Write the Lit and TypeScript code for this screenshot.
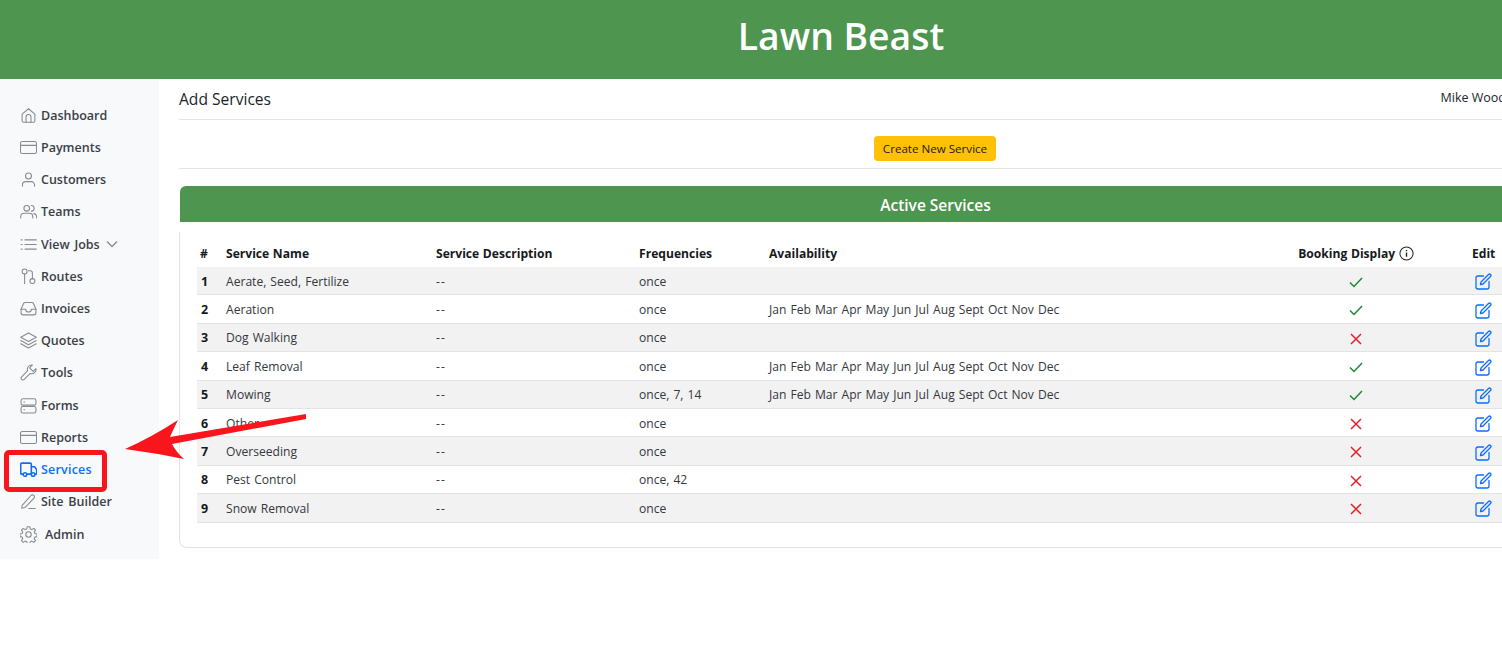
import { LitElement, css, html, svg } from 'lit';
import { customElement } from 'lit/decorators.js';

const icons: Record<string, unknown> = {
	home: svg`<path d="M3 10 12 2.500 21 10v9.500a2 2 0 0 1-2 2H5a2 2 0 0 1-2-2z"/><path d="M8.500 21.500V14a3.500 3.500 0 0 1 7 0v7.500"/>`,
	card: svg`<rect x="0.700" y="3.500" width="22.600" height="17" rx="2.500"/><path d="M0.700 9h22.600"/>`,
	user: svg`<circle cx="12" cy="7" r="4.200"/><path d="M3.500 21.500v-2a4.500 4.500 0 0 1 4.500-4.500h8a4.500 4.500 0 0 1 4.500 4.500v2"/>`,
	users: svg`<circle cx="9.500" cy="7.500" r="4"/><path d="M1 21v-2a4.500 4.500 0 0 1 4.500-4.500h8a4.500 4.500 0 0 1 4.500 4.500v2"/><path d="M16 3.500a4 4 0 0 1 0 8M19.500 15a4.500 4.500 0 0 1 4 4.500V21"/>`,
	list: svg`<path d="M7 5.500h16M7 12h16M7 18.500h16M1.500 5.500h1.500M1.500 12h1.500M1.500 18.500h1.500"/>`,
	route: svg`<circle cx="6.500" cy="5" r="3.500"/><path d="M6.500 8.500V22"/><circle cx="17.500" cy="18.500" r="3.500"/><path d="M17.500 15V7a3 3 0 0 0-3-3H12"/>`,
	inbox: svg`<path d="M1.500 13v5a3 3 0 0 0 3 3h15a3 3 0 0 0 3-3v-5"/><path d="M1.500 13 5 5a2.500 2.500 0 0 1 2.300-1.500h9.400A2.500 2.500 0 0 1 19 5l3.500 8H16a4 4 0 0 1-8 0z"/>`,
	layers: svg`<path d="M12 1.500 23 7.500l-11 6-11-6z"/><path d="M1 12l11 6 11-6"/><path d="M1 16.500l11 6 11-6"/>`,
	wrench: svg`<path d="M22.500 6.500a6 6 0 0 1-8 6.800L5.500 22a2.500 2.500 0 0 1-3.500-3.500l8.800-9a6 6 0 0 1 6.700-8L13.500 5.500l5 5z"/>`,
	forms: svg`<rect x="1.500" y="2.500" width="21" height="9" rx="2.500"/><rect x="1.500" y="13.500" width="21" height="9" rx="2.500"/><path d="M5.500 7h1M5.500 18h1"/>`,
	truck: svg`<path d="M4 18.500H2.500A1.500 1.500 0 0 1 1 17V5a2 2 0 0 1 2-2h11.500a1.500 1.500 0 0 1 1.500 1.500v14H9.500"/><path d="M16 8h4.500l3 4v5a1.500 1.500 0 0 1-1.500 1.500h-.5"/><circle cx="7" cy="19" r="2.500"/><circle cx="18.500" cy="19" r="2.500"/>`,
	pen: svg`<path d="M3 17.500 15.500 3.500a2.800 2.800 0 0 1 4 4L7 20.500 2.500 21.500z"/><path d="M12.500 22h9"/>`,
	gear: svg`<circle cx="12" cy="12" r="3.800"/><path d="M10.200 1h3.600l.700 3.200 2.200.900 2.700-1.800 2.500 2.500-1.800 2.700.900 2.200 3 .700v3.600l-3 .700-.900 2.200 1.800 2.700-2.500 2.500-2.700-1.800-2.200.900-.700 3.200h-3.600l-.700-3.200-2.200-.900-2.700 1.800-2.500-2.500 1.800-2.700-.900-2.200-3-.700v-3.600l3-.700.900-2.200-1.800-2.700 2.500-2.500 2.700 1.800 2.200-.900z"/>`,
};

const nav = [
	{ label: 'Dashboard', icon: 'home' },
	{ label: 'Payments', icon: 'card' },
	{ label: 'Customers', icon: 'user' },
	{ label: 'Teams', icon: 'users' },
	{ label: 'View Jobs', icon: 'list', caret: true },
	{ label: 'Routes', icon: 'route' },
	{ label: 'Invoices', icon: 'inbox' },
	{ label: 'Quotes', icon: 'layers' },
	{ label: 'Tools', icon: 'wrench' },
	{ label: 'Forms', icon: 'forms' },
	{ label: 'Reports', icon: 'card' },
	{ label: 'Services', icon: 'truck', active: true },
	{ label: 'Site Builder', icon: 'pen' },
	{ label: 'Admin', icon: 'gear', admin: true },
];

const months = 'Jan Feb Mar Apr May Jun Jul Aug Sept Oct Nov Dec';

const services = [
	{ name: 'Aerate, Seed, Fertilize', freq: 'once', avail: '', on: true },
	{ name: 'Aeration', freq: 'once', avail: months, on: true },
	{ name: 'Dog Walking', freq: 'once', avail: '', on: false },
	{ name: 'Leaf Removal', freq: 'once', avail: months, on: true },
	{ name: 'Mowing', freq: 'once, 7, 14', avail: months, on: true },
	{ name: 'Other', freq: 'once', avail: '', on: false },
	{ name: 'Overseeding', freq: 'once', avail: '', on: false },
	{ name: 'Pest Control', freq: 'once, 42', avail: '', on: false },
	{ name: 'Snow Removal', freq: 'once', avail: '', on: false },
];

@customElement('app-root')
export class AppRoot extends LitElement {
	static styles = css`
		:host {
			display: block;
			position: relative;
			width: 1502px;
			height: 657px;
			overflow: hidden;
			background: #fff;
			font-family: 'Open Sans', 'Noto Sans', sans-serif;
			font-size: 12.5px;
			color: #212529;
		}
		.banner {
			height: 79px;
			box-sizing: border-box;
			padding-bottom: 8px;
			width: 1682px;
			background: #4e9550;
			color: #fff;
			display: flex;
			align-items: center;
			justify-content: center;
			font-size: 37.3px;
			font-weight: 600;
		}
		.layout {
			display: flex;
			align-items: flex-start;
			width: 1691px;
		}
		.side {
			flex: 0 0 159px;
			height: 480px;
			box-sizing: border-box;
			padding-top: 20.1px;
			background: #f8f9fa;
		}
		.nav-item {
			height: 32.23px;
			display: flex;
			align-items: center;
			padding-left: 20px;
			gap: 4px;
			font-weight: 600;
			color: #3b4148;
			word-spacing: 1.5px;
		}
		.nav-item.active {
			color: #0d6efd;
			letter-spacing: 0.2px;
		}
		.nav-item.admin {
			gap: 8px;
		}
		.nav-icon {
			width: 17px;
			height: 17px;
			fill: none;
			stroke: #868b90;
			stroke-width: 1.500;
			stroke-linecap: round;
			stroke-linejoin: round;
			flex: none;
		}
		.active .nav-icon {
			stroke: #0d6efd;
			stroke-width: 2.200;
		}
		.caret {
			width: 12px;
			height: 12px;
			margin-left: 2px;
			fill: none;
			stroke: #868b90;
			stroke-width: 1.300;
		}
		.main {
			flex: 1;
			padding-left: 20px;
		}
		.top {
			height: 41px;
			box-sizing: border-box;
			padding-top: 9px;
			display: flex;
			justify-content: space-between;
			border-bottom: 1px solid #e3e3e3;
			font-size: 15.6px;
		}
		.user {
			font-size: 12.5px;
			padding: 1px 185px 0 0;
		}
		.actions {
			height: 49px;
			box-sizing: border-box;
			display: flex;
			align-items: flex-start;
			justify-content: center;
			border-bottom: 1px solid #e3e3e3;
			padding-top: 16px;
		}
		.btn {
			width: 122px;
			height: 25px;
			display: flex;
			align-items: center;
			justify-content: center;
			background: #ffc107;
			border-radius: 4px;
			font-size: 11.6px;
			color: #1b1b1b;
		}
		.card-head {
			margin: 17px 0 0 1px;
			height: 36px;
			box-sizing: border-box;
			padding-top: 1px;
			display: flex;
			align-items: center;
			justify-content: center;
			background: #4e9550;
			color: #fff;
			font-size: 15.5px;
			font-weight: 600;
			border-radius: 6px 6px 0 0;
		}
		.card-body {
			margin: 10px 0 0 0;
			height: 316px;
			box-sizing: border-box;
			padding: 10px 0 0 17px;
			border: 1px solid #e3e3e3;
			border-top: 0;
			border-radius: 0 0 8px 8px;
		}
		table {
			border-collapse: collapse;
			table-layout: fixed;
			width: 1490px;
			font-size: 12.1px;
		}
		.c-num { width: 25px; }
		.c-name { width: 210px; }
		.c-desc { width: 203px; }
		.c-freq { width: 130px; }
		.c-avail { width: 479px; }
		.c-book { width: 224px; }
		th {
			height: 25px;
			padding: 0 0 2px 4px;
			box-sizing: border-box;
			text-align: left;
			font-weight: 700;
			color: #16191c;
			white-space: nowrap;
			word-spacing: 0.5px;
		}
		td {
			height: 26.4px;
			padding: 1px 0 0 4px;
			border-bottom: 1px solid #e3e3e3;
			white-space: nowrap;
			color: #33383d;
			word-spacing: 0.9px;
		}
		tbody tr:nth-child(odd) td {
			background: #f2f2f2;
		}
		th.num {
			padding-left: 3px;
		}
		td.num {
			font-weight: 700;
			font-size: 12.5px;
			color: #16191c;
		}
		td.dash {
			letter-spacing: 1px;
		}
		th.book {
			text-align: center;
			padding-left: 0;
		}
		td.book {
			text-align: center;
			padding-left: 0;
		}
		.info {
			width: 15px;
			height: 15px;
			vertical-align: -3px;
			fill: none;
			stroke: #212529;
			stroke-width: 1.100;
		}
		.mark {
			width: 16px;
			height: 16px;
			display: inline-block;
			vertical-align: middle;
			margin-top: -1px;
			fill: none;
			stroke-width: 1.500;
		}
		.mark.yes { stroke: #198a30; }
		.mark.no { stroke: #e8202a; }
		.edit {
			width: 17px;
			height: 17px;
			display: inline-block;
			vertical-align: middle;
			margin-left: 3px;
			fill: none;
			stroke: #0d6efd;
			stroke-width: 1.300;
			stroke-linecap: round;
			stroke-linejoin: round;
		}
		.callout {
			position: absolute;
			left: 4px;
			top: 450px;
			width: 103px;
			height: 42px;
			box-sizing: border-box;
			border: 5px solid #f8151c;
			border-radius: 5px;
		}
		.arrow {
			position: absolute;
			left: 120px;
			top: 405px;
			width: 195px;
			height: 60px;
		}
	`;

	render() {
		return html`
			<div class="banner">Lawn Beast</div>
			<div class="layout">
				<nav class="side">
					${nav.map(
						(n) => html`<div class="nav-item ${n.active ? 'active' : ''} ${n.admin ? 'admin' : ''}">
							<svg class="nav-icon" viewBox="0 0 24 24">${icons[n.icon]}</svg>
							<span>${n.label}</span>
							${n.caret ? html`<svg class="caret" viewBox="0 0 12 12"><path d="M1 3.500 6 8.500l5-5" /></svg>` : ''}
						</div>`,
					)}
				</nav>
				<div class="main">
					<div class="top">
						<span>Add Services</span>
						<span class="user">Mike Wood</span>
					</div>
					<div class="actions"><div class="btn">Create New Service</div></div>
					<div class="card-head">Active Services</div>
					<div class="card-body">
						<table>
							<colgroup>
								<col class="c-num" /><col class="c-name" /><col class="c-desc" /><col class="c-freq" /><col class="c-avail" /><col class="c-book" /><col />
							</colgroup>
							<thead>
								<tr>
									<th class="num">#</th>
									<th>Service Name</th>
									<th>Service Description</th>
									<th>Frequencies</th>
									<th>Availability</th>
									<th class="book">
										Booking Display
										<svg class="info" viewBox="0 0 16 16">
											<circle cx="8" cy="8" r="7" />
											<path d="M8 7v4.500M8 4.300v1.200" stroke-width="1.500" />
										</svg>
									</th>
									<th>Edit</th>
								</tr>
							</thead>
							<tbody>
								${services.map(
									(s, i) => html`<tr>
										<td class="num">${i + 1}</td>
										<td>${s.name}</td>
										<td class="dash">--</td>
										<td>${s.freq}</td>
										<td>${s.avail}</td>
										<td class="book">
											${s.on
												? html`<svg class="mark yes" viewBox="0 0 16 16"><path d="M2 8.500 6 12.500 14 4" /></svg>`
												: html`<svg class="mark no" viewBox="0 0 16 16"><path d="M3 3l10 10M13 3 3 13" /></svg>`}
										</td>
										<td>
											<svg class="edit" viewBox="0 0 17 17">
												<path d="M8.500 3H3a2 2 0 0 0-2 2v9a2 2 0 0 0 2 2h9a2 2 0 0 0 2-2V8.500" />
												<path d="M6 9 13.500 1.500a1.400 1.400 0 0 1 2 2L8 11l-2.500.500z" />
											</svg>
										</td>
									</tr>`,
								)}
							</tbody>
						</table>
					</div>
				</div>
			</div>
			<div class="callout"></div>
			<svg class="arrow" viewBox="120 405 195 60">
				<path d="M125 449Q152 437 178 420Q173 430 170 437L306 414 306 419 172 444Q176 452 184 459Q155 453 125 449z" fill="#f8151c" />
			</svg>
		`;
	}
}
